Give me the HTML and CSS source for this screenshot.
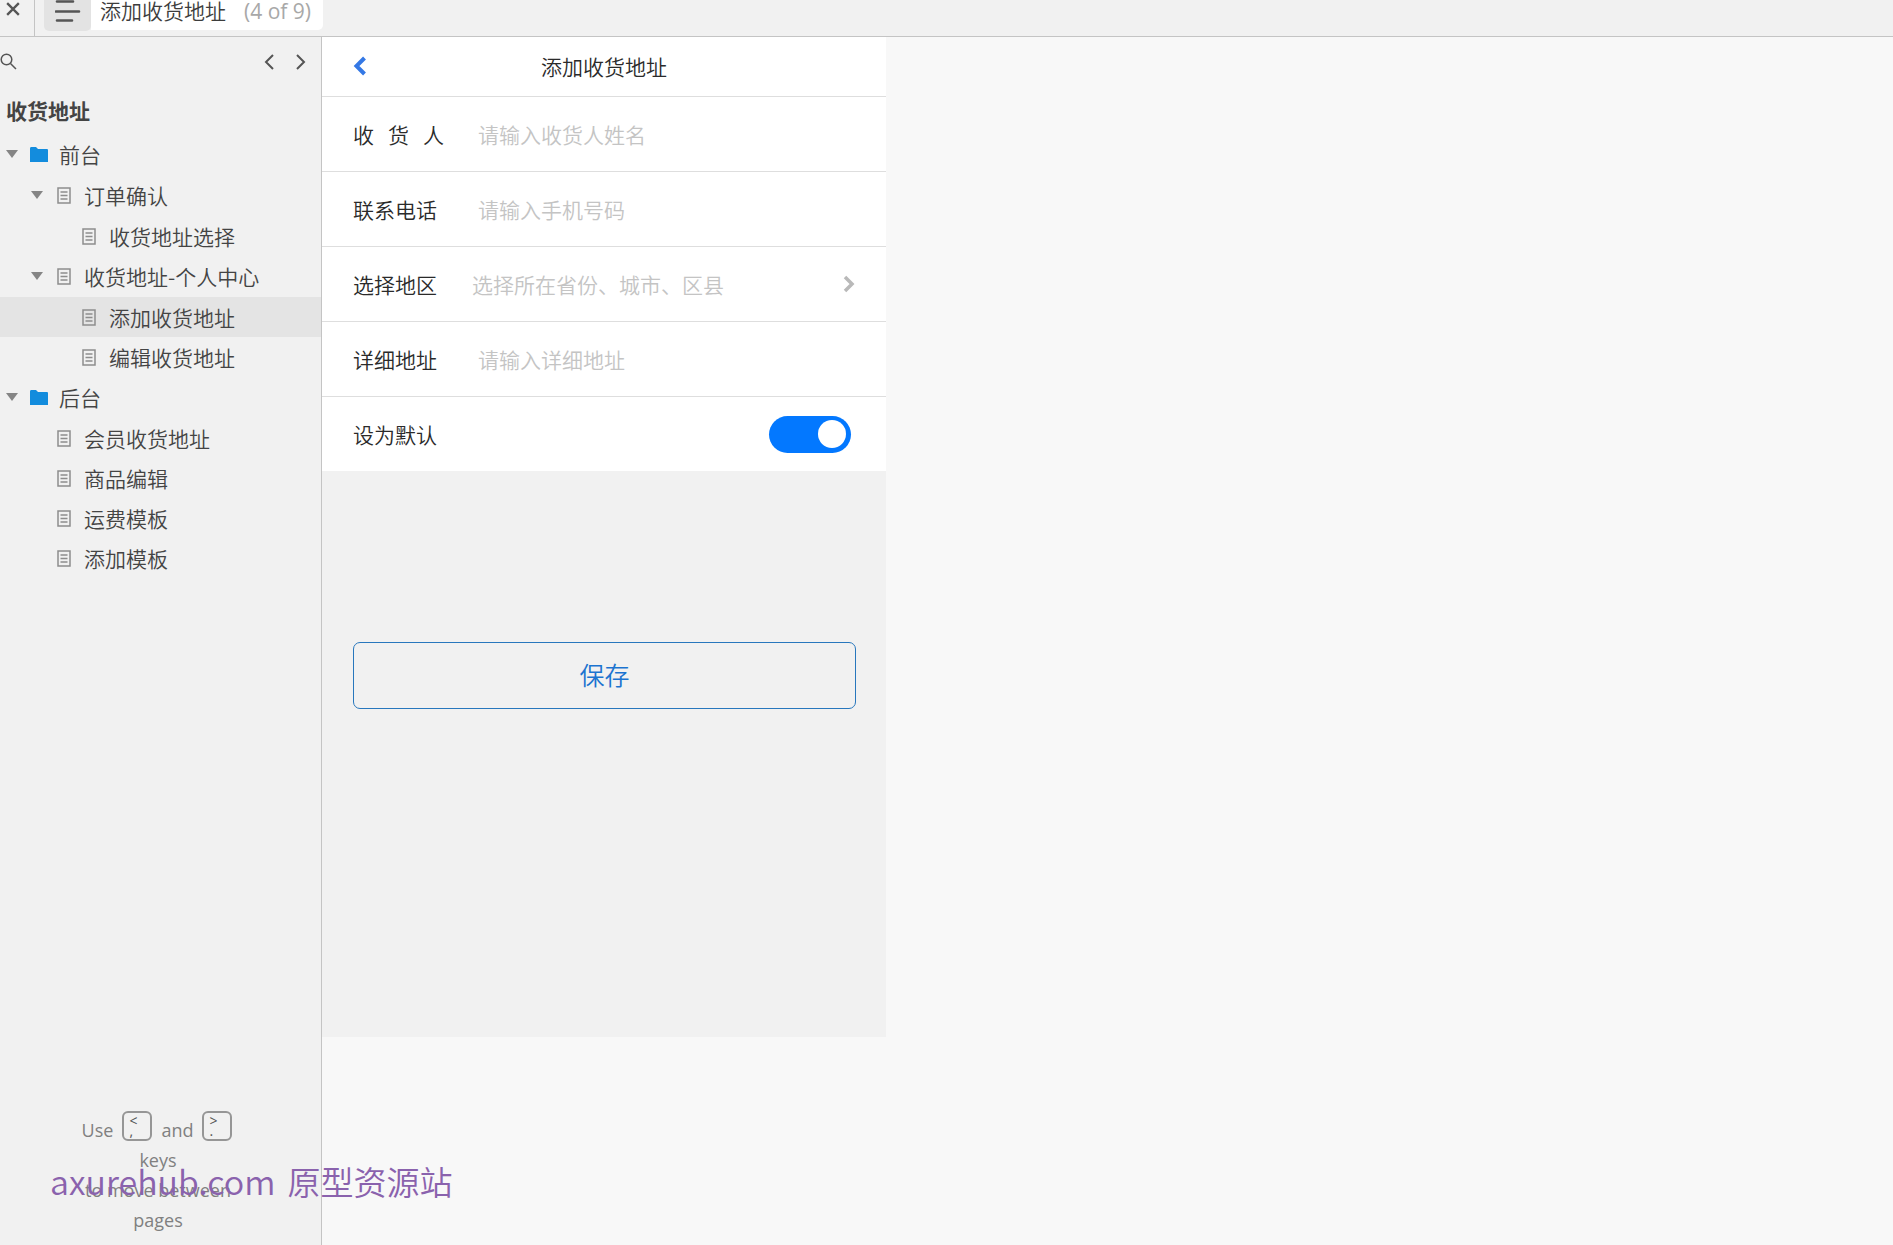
FILE: index.html
```html
<!DOCTYPE html>
<html lang="zh-CN">
<head>
<meta charset="utf-8">
<title>添加收货地址</title>
<link rel="stylesheet" href="styles.css">
</head>
<body>
<svg class="defs" aria-hidden="true">
  <symbol id="page" viewBox="0 0 14 17"><path d="M1 1h12v15H1z" fill="none" stroke="#8d8d8d" stroke-width="1.5"/><path d="M3.5 5h7M3.5 8.500h7M3.500 12h7" stroke="#8d8d8d" stroke-width="1.300"/></symbol>
  <symbol id="folder" viewBox="0 0 18 15"><path d="M0 1.500Q0 0 1 0H6L8 2H17Q18 2 18 3V15H0z" fill="#138cdd"/></symbol>
  <symbol id="arrow" viewBox="0 0 12 8"><path d="M0 0H12L6 8z" fill="#858585"/></symbol>
</svg>
<header class="topbar">
  <button class="close" aria-label="关闭"><svg width="14" height="14" viewBox="0 0 12 12"><path d="M1 1L11 11M11 1L1 11" stroke="#555" stroke-width="2"/></svg></button>
  <button class="menu" aria-label="菜单"><svg width="26" height="24" viewBox="0 0 26 24"><path d="M2 1.500H18M1 11.500H24M2 20.500H17" stroke="#555" stroke-width="2.600" stroke-linecap="round"/></svg></button>
  <div class="current"><span>添加收货地址</span><span class="count">(4 of 9)</span></div>
</header>
<div class="workspace">
  <aside class="sidebar">
    <div class="tools">
      <button class="search" aria-label="搜索"><svg width="17" height="17" viewBox="0 0 17 17" fill="none" stroke="#555" stroke-width="1.500"><circle cx="6.500" cy="6.500" r="5.300"/><path d="M10.500 10.500L16 16"/></svg></button>
      <button aria-label="上一页"><svg width="10" height="16" viewBox="0 0 10 16"><path d="M9 1L2 8L9 15" fill="none" stroke="#555" stroke-width="2"/></svg></button>
      <button aria-label="下一页"><svg width="10" height="16" viewBox="0 0 10 16"><path d="M1 1L8 8L1 15" fill="none" stroke="#555" stroke-width="2"/></svg></button>
    </div>
    <h1 class="project">收货地址</h1>
    <nav>
      <ul class="tree">
        <li><a class="row" href="#"><svg class="arrow"><use href="#arrow"/></svg><svg class="icon"><use href="#folder"/></svg>前台</a>
          <ul>
            <li><a class="row level2" href="#"><svg class="arrow"><use href="#arrow"/></svg><svg class="icon"><use href="#page"/></svg>订单确认</a>
              <ul>
                <li><a class="row level3" href="#"><svg class="icon"><use href="#page"/></svg>收货地址选择</a></li>
              </ul>
            </li>
            <li><a class="row level2" href="#"><svg class="arrow"><use href="#arrow"/></svg><svg class="icon"><use href="#page"/></svg>收货地址-个人中心</a>
              <ul>
                <li><a class="row level3 selected" href="#"><svg class="icon"><use href="#page"/></svg>添加收货地址</a></li>
                <li><a class="row level3" href="#"><svg class="icon"><use href="#page"/></svg>编辑收货地址</a></li>
              </ul>
            </li>
          </ul>
        </li>
        <li><a class="row" href="#"><svg class="arrow"><use href="#arrow"/></svg><svg class="icon"><use href="#folder"/></svg>后台</a>
          <ul>
            <li><a class="row leaf" href="#"><svg class="icon"><use href="#page"/></svg>会员收货地址</a></li>
            <li><a class="row leaf" href="#"><svg class="icon"><use href="#page"/></svg>商品编辑</a></li>
            <li><a class="row leaf" href="#"><svg class="icon"><use href="#page"/></svg>运费模板</a></li>
            <li><a class="row leaf" href="#"><svg class="icon"><use href="#page"/></svg>添加模板</a></li>
          </ul>
        </li>
      </ul>
    </nav>
    <div class="hint">
      <p class="keys">Use <kbd><span>&lt;</span><span>,</span></kbd> and <kbd><span>&gt;</span><span>.</span></kbd></p>
      <p>keys</p>
      <p>to move between</p>
      <p>pages</p>
    </div>
  </aside>
  <main class="canvas">
    <form class="phone">
      <div class="titlebar">
        <button type="button" class="back" aria-label="返回"><svg width="14" height="20" viewBox="0 0 14 20"><path d="M11.500 2L3.500 10L11.500 18" fill="none" stroke="#3478e5" stroke-width="4"/></svg></button>
        <h2>添加收货地址</h2>
      </div>
      <div class="field"><label for="name">收&nbsp;&nbsp;&nbsp;货&nbsp;&nbsp;&nbsp;人</label><input id="name" type="text" placeholder="请输入收货人姓名"></div>
      <div class="field"><label for="phone">联系电话</label><input id="phone" type="tel" placeholder="请输入手机号码"></div>
      <div class="field"><label for="area">选择地区</label><select id="area"><option>选择所在省份、城市、区县</option></select><svg width="12" height="18" viewBox="0 0 12 18"><path d="M2 2L9 9L2 16" fill="none" stroke="#b9b9b9" stroke-width="3.500"/></svg></div>
      <div class="field"><label for="detail">详细地址</label><input id="detail" type="text" placeholder="请输入详细地址"></div>
      <div class="field last"><label for="default">设为默认</label><input id="default" class="switch" type="checkbox" role="switch" checked></div>
      <div class="actions"><button type="button" class="save">保存</button></div>
    </form>
  </main>
</div>
<div class="watermark"><span class="site">axurehub.com</span><span>原型资源站</span></div>
</body>
</html>
```
FILE: styles.css
```css
* { box-sizing: border-box; }
body {
  margin: 0;
  min-height: 100vh;
  display: flex;
  flex-direction: column;
  background: #f8f8f8;
  color: #444;
  font: 350 21px/30px "Noto Sans CJK SC", sans-serif;
}
button { padding: 0; border: 0; background: none; font: inherit; color: inherit; display: flex; align-items: center; justify-content: center; }
h1, h2, p, ul { margin: 0; padding: 0; }
ul { list-style: none; }
svg { flex: none; display: block; }
.defs { position: absolute; width: 0; height: 0; }

.topbar { display: flex; height: 37px; background: #f1f1f1; border-bottom: 1px solid #c4c4c4; }
.close { width: 35px; padding: 0 8px 18px 0; border-right: 1px solid #c4c4c4; }
.menu { width: 47px; height: 31px; margin-left: 9px; padding-bottom: 8px; background: #e3e3e3; border-radius: 0 0 5px 5px; }
.current { display: flex; gap: 18px; height: 30px; padding: 0 12px 0 9px; background: #fff; border-radius: 0 0 5px 0; line-height: 20px; color: #3c3c3c; }
.count { font: 21px/22px "Open Sans", sans-serif; color: #a8a8a8; }

.workspace { flex: 1; display: flex; }
.sidebar { width: 322px; flex: none; display: flex; flex-direction: column; background: #f1f1f1; border-right: 1px solid #c4c4c4; }
.tools { display: flex; gap: 22px; padding: 16px 15px 0 0; }
.search { margin-right: auto; }
.project { padding: 25px 6px 9px; font-size: 21px; line-height: 30px; font-weight: 700; }
.tree ul { padding-top: 1px; }
.row { display: flex; align-items: center; height: 40px; padding-left: 6px; color: #444; text-decoration: none; }
.level2 { padding-left: 31px; }
.leaf { padding-left: 55px; }
.level3 { padding-left: 80px; }
.selected { background: #e4e4e4; }
.arrow { width: 12px; height: 8px; margin-right: 12px; }
.icon { width: 18px; height: 17px; margin-right: 11px; }
.hint { margin-top: auto; padding: 0 5px 10px 0; text-align: center; font: 18px/30px "Open Sans", sans-serif; color: #808080; }
.keys { display: flex; justify-content: center; gap: 9px; padding-right: 2px; }
kbd { display: flex; flex-direction: column; width: 30px; height: 30px; margin-top: -4px; padding: 3px 0 0 5px; border: 2px solid #969696; border-radius: 6px; font: 14px/10px "Open Sans", sans-serif; color: #555; text-align: left; }

.canvas { flex: 1; min-width: 0; }
.phone { width: 564px; height: 1000px; background: #f1f1f1; color: #2a2a2a; }
.titlebar { display: grid; grid-template-columns: 14px 1fr 14px; align-items: center; height: 60px; padding: 0 31px 2px; background: #fff; border-bottom: 1px solid #dedede; }
.titlebar h2 { font-size: 21px; font-weight: inherit; text-align: center; }
.field { display: flex; align-items: center; height: 75px; padding: 0 31px; background: #fff; border-bottom: 1px solid #dedede; }
.last { height: 74px; border-bottom: 0; }
.field label { width: 119px; flex: none; white-space: nowrap; }
.field input, .field select { font: inherit; border: 0; background: none; outline: 0; }
.field input:not(.switch) { flex: 1; min-width: 0; height: 40px; padding: 0 0 0 6px; }
.field input::placeholder { color: #c4c4c4; opacity: 1; }
.field select { appearance: none; flex: 1; min-width: 0; height: 40px; padding: 0; color: #c4c4c4; }
.field .switch { appearance: none; display: flex; justify-content: flex-end; align-items: center; width: 82px; height: 37px; margin: 0 4px 0 auto; padding: 0 5px; border-radius: 19px; background: #0378ff; }
.switch::before { content: ""; width: 28px; height: 28px; border-radius: 50%; background: #fff; }
.actions { padding: 171px 30px 0 31px; }
.save { width: 100%; height: 67px; padding-bottom: 3px; border: 1px solid #2877bd; border-radius: 7px; font-size: 25px; color: #1c74d0; }
.watermark { position: absolute; left: 50px; bottom: 40px; display: flex; align-items: baseline; gap: 12px; font-size: 33px; line-height: 48px; color: #8a62ad; white-space: nowrap; pointer-events: none; }
.site { font-size: 34px; }
```
